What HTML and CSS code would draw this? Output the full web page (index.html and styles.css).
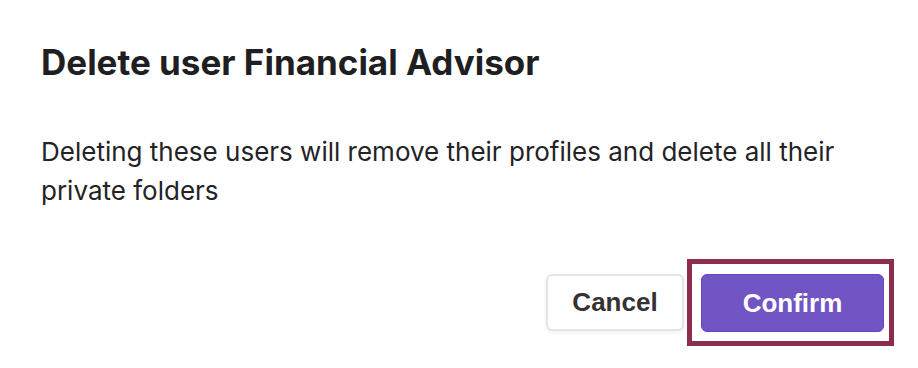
FILE: index.html
```html
<!DOCTYPE html>
<html>
  <head>
    <meta charset="UTF-8">
    <title>Delete user</title>
    <link rel="stylesheet" href="styles.css">
  </head>
  <body>
    <section class="dialog">
      <h1 class="dialog-title">Delete user Financial Advisor</h1>
      <p class="dialog-text">Deleting these users will remove their profiles and delete all their private folders</p>
      <div class="dialog-actions">
        <button class="btn btn-cancel">Cancel</button>
        <span class="focus-ring">
          <button class="btn btn-confirm">Confirm</button>
        </span>
      </div>
    </section>
  </body>
</html>
```

FILE: styles.css
```css
body{
    margin:0;
    background:#fff;
}
.dialog{
    padding:41px 24px 0 41px;
    font-family:Inter, "Liberation Sans", sans-serif;
    color:#1f1f23;
}
.dialog-title{
    margin:0;
    font-size:35px;
    font-weight:700;
    line-height:42px;
}
.dialog-text{
    margin:49px 0 0 0;
    font-size:26px;
    line-height:39px;
    color:#232327;
}
.dialog-actions{
    display:flex;
    justify-content:flex-end;
    align-items:center;
    gap:3px;
    margin-top:49px;
}
.btn{
    box-sizing:border-box;
    font-family:"Liberation Sans", Arial, sans-serif;
    font-size:26px;
    font-weight:bold;
    border-radius:6px;
    cursor:pointer;
}
.btn-cancel{
    height:57px;
    width:138px;
    background:#fff;
    color:#333336;
    border:2px solid #e3e3e8;
    box-shadow:0 2px 4px rgba(0,0,0,0.06);
}
.focus-ring{
    display:inline-flex;
    border:5px solid #8c2d4e;
    padding:10px 5px 9px 9px;
}
.btn-confirm{
    height:58px;
    width:183px;
    background:#7155c4;
    color:#fff;
    border:1px solid #6446c0;
}
```
